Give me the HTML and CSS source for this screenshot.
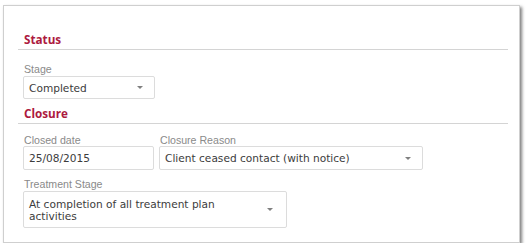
FILE: index.html
```html
<!DOCTYPE html>
<html lang="en">
<head>
  <meta charset="UTF-8">
  <title>Closure</title>
  <link rel="stylesheet" href="styles.css">
</head>
<body>

  <div class="panel">
    <h2 class="section-title status-title">Status</h2>
    <div class="fields">
      <div class="field stage-field">
        <label>Stage</label>
        <div class="select stage-select"><span class="value">Completed</span><span class="arrow"></span></div>
      </div>
    </div>

    <h2 class="section-title closure-title">Closure</h2>
    <div class="fields">
      <div class="row">
        <div class="field date-field">
          <label>Closed date</label>
          <input type="text" class="text-input" value="25/08/2015">
        </div>
        <div class="field reason-field">
          <label>Closure Reason</label>
          <div class="select"><span class="value">Client ceased contact (with notice)</span><span class="arrow"></span></div>
        </div>
      </div>
      <div class="field treatment-field">
        <label>Treatment Stage</label>
        <div class="select tall"><span class="value">At completion of all treatment plan activities</span><span class="arrow"></span></div>
      </div>
    </div>
  </div>

</body>
</html>
```

FILE: styles.css
```css
body { margin: 0; background: #fff; font-family: "Liberation Sans", Arial, sans-serif; }
.panel { box-sizing: border-box; width: 517px; height: 238px; margin: 5px 0 0 3px; padding: 26px 11px 0 14px; border: 1px solid #cfcfcf; box-shadow: 2px 2px 3px rgba(0,0,0,0.5); background: #fff; }
.section-title { margin: 0; padding: 0 0 3px 6px; font-family: "Open Sans", sans-serif; font-weight: bold; font-size: 11.7px; line-height: 14px; color: #ad1a3e; border-bottom: 1px solid #d4d4d4; }
.closure-title { margin-top: 7px; }
.fields { padding-left: 5px; padding-top: 13px; }
.closure-title + .fields { padding-top: 10px; }
.field label { display: block; padding-left: 1px; font-size: 10.6px; line-height: 12px; color: #8a8a8a; margin-bottom: 0; }
.stage-field label { margin-bottom: 1px; }
.row { display: flex; gap: 5px; }
.date-field { width: 131px; }
.reason-field { width: 264px; }
.treatment-field { width: 264px; margin-top: 8px; }
.treatment-field label { margin-bottom: 1px; }
.select, .text-input { box-sizing: border-box; display: flex; align-items: center; height: 24px; padding: 0 11px 0 5px; border: 1px solid #dcdcdc; border-radius: 2px; background: #fff; font-family: "DejaVu Sans", Verdana, sans-serif; font-size: 10.6px; color: #3c3c3c; }
.stage-select { width: 132px; height: 23px; }
.text-input { width: 131px; margin: 0; outline: none; }
.select .value { flex: 1; }
.tall { height: 37px; padding-right: 13px; }
.tall .value { line-height: 12px; padding-right: 20px; }
.arrow { width: 0; height: 0; border-left: 3px solid transparent; border-right: 3px solid transparent; border-top: 3px solid #808080; }
```
